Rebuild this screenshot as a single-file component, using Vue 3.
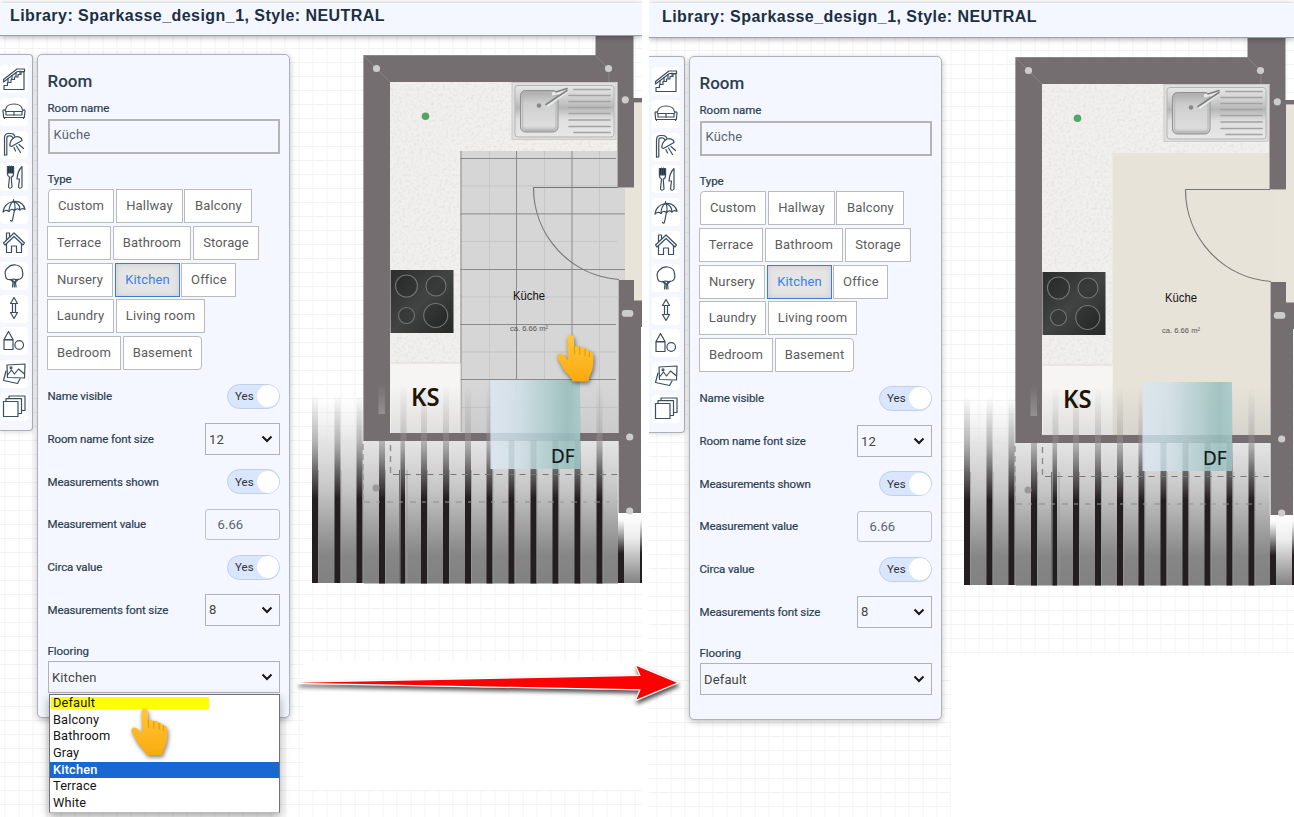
<script setup>
const screens = [
  { id: 'before', view: '0 0 642 817', flooring: 'Kitchen', open: true, tiled: true, floor: '#d6d6d6' },
  { id: 'after', view: '-3 -2 645 817', flooring: 'Default', open: false, tiled: false, floor: '#e7e3d8' },
]

const typeRows = [
  [['Custom', 66], ['Hallway', 67], ['Balcony', 68]],
  [['Terrace', 64], ['Bathroom', 78], ['Storage', 66]],
  [['Nursery', 66], ['Kitchen', 65], ['Office', 55]],
  [['Laundry', 67], ['Living room', 89]],
  [['Bedroom', 74], ['Basement', 79]],
]

const floorings = ['Default', 'Balcony', 'Bathroom', 'Gray', 'Kitchen', 'Terrace', 'White']

const rows = [
  { label: 'Name visible', kind: 'toggle' },
  { label: 'Room name font size', kind: 'select', value: '12' },
  { label: 'Measurements shown', kind: 'toggle' },
  { label: 'Measurement value', kind: 'input', value: '6.66' },
  { label: 'Circa value', kind: 'toggle' },
  { label: 'Measurements font size', kind: 'select', value: '8' },
]

const icons = [
  ['M2 22.500V18.500H5.500V15.500H9V12.500H12.500V10H16V7.500H19V5H22V22.500Z', 'M1.500 15L15.500 4.500H22.500V2H15L1.500 12.500Z', 'M6 11.500V15M10 8.500V12M14 5.500V9.500M18 4V7.500'],
  ['M3.500 11C4 6.500 8 5 12 5S20 6.500 20.500 11', 'M1 12Q1 10.500 2.800 11L4 13V16H20V13L21.200 11Q23 10.500 23 12L22.300 18.500H1.700Z', 'M4 12.500H20M12 12.500V16M2.500 18.500V19.500M21.500 18.500V19.500'],
  ['M2.500 23V6Q2.500 1.500 6.500 1.500H9Q12 1.500 13 4.500', 'M4.800 23V6.500Q4.800 3.800 7 3.800H8.500Q10 3.800 11 6M2.500 23H4.800', 'M8 14Q7.500 9 11.500 6Q15.500 3 19.500 6.500L20 8.500L9.500 14.500Z', 'M12 15.500L13.500 19M14.500 14L18.500 20.500M17 12.500L21.500 16.500'],
  ['M5.500 1.500V9Q5.500 11.500 7.500 12L6.500 22Q8 24.500 10 22L9.200 12Q11.500 11.500 11.500 9V1.500Z', 'M5.500 1.500H11.500V8H5.500ZM7.500 1V8M9.500 1V8', 'M20 1.500Q15.500 6 15 14H17.500L16.500 22Q18 24.500 20 22Z'],
  ['M1 14Q2 5.500 11 3.500Q21 2.500 23 11.500Q20 9.500 18 12Q15 9.500 12.500 12.500Q9 10 7 13.500Q4 11 1 14Z', 'M11 3.500Q7 7 7 13.500M11.500 3.500Q14 7 12.500 12.500M12 3.500Q18 6 18 12M11.500 1.500V3.500', 'M12.500 12L10.500 22Q10 24 8.500 22.500'],
  ['M1.500 13L12 3L22.500 13L21 15L12 6.500L3 15Z', 'M4.500 13.500V22.500H9.500V16H14.500V22.500H19.500V13.500', 'M4.500 9.500V3H7.500V7'],
  ['M9.500 16.500Q3.500 17.500 3.500 12.500Q2 8 5.500 5Q9 1 14 2Q20.500 3 20.500 9Q22 14 18 16Q14 17 11.500 16Z', 'M8.500 16.500L11 19L10.500 24M14 24L13.500 19L16 16.500M10.500 17L12.500 19.500L14 17M12.300 19.500V24'],
  ['M12 1.500L15.500 7.500H13.500V16.500H15.500L12 22.500L8.500 16.500H10.500V7.500H8.500Z', 'M8.500 7.500H15.500M8.500 16.500H15.500'],
  ['M6.500 2.500L11 10.500H2Z', 'M2 11H11V20.500H2Z', 'M21.500 16A4.300 4.300 0 1 1 12.900 16A4.300 4.300 0 1 1 21.500 16Z'],
  ['M5 3L23 2L22.500 16L5.500 15.500Z', 'M5.500 13L9.500 8L12.500 12L16.500 7L22.500 12', 'M8 5.800A1 1 0 1 1 10 5.800A1 1 0 1 1 8 5.800', 'M4 9L1.500 18.500L15.500 21.500L18 17'],
  ['M1.500 7.500H16V22.500H1.500Z', 'M4 7V4.700H19.500V19.500H16.500', 'M7 4.500V2H23V16.500H20'],
]

const bars = [312, 334.5, 356.5, 379, 400.5, 421, 443, 465, 486.5, 508.5, 530.5, 552.5, 574.5, 596.500]
const darkX = [461, 516.5, 572]
const lightX = [489.5, 544.5, 599.5]
const darkY = [158.5, 213.9, 269.5, 324.5, 379.5]
const lightY = [186, 241.5, 297, 352, 407.5]
const nodes = [[376.5, 68.5], [608.5, 68.5], [625.3, 99.8], [629.7, 437], [629.7, 511]]
const hobs = [[406.5, 286, 11], [436, 286, 10], [406.5, 315.5, 8], [435.7, 315.5, 12]]
</script>

<template>
  <main class="board">
    <section v-for="s in screens" :key="s.id" class="screen" :class="s.id">
      <svg class="plan" :viewBox="s.view">
        <defs>
          <pattern id="grid" x="312.5" y="48" width="14" height="14" patternUnits="userSpaceOnUse">
            <path d="M0 .5H14M.5 0V14" stroke="#f3f3f3" fill="none" />
          </pattern>
          <linearGradient id="deck" gradientUnits="userSpaceOnUse" x1="0" y1="395" x2="0" y2="583">
            <stop offset="0" stop-color="#eee" stop-opacity="0" />
            <stop offset=".25" stop-color="#dfdfdf" stop-opacity=".85" />
            <stop offset=".5" stop-color="#c6c6c6" />
            <stop offset=".85" stop-color="#868686" />
            <stop offset="1" stop-color="#818181" />
          </linearGradient>
          <linearGradient id="bar" gradientUnits="userSpaceOnUse" x1="0" y1="395" x2="0" y2="583">
            <stop offset="0" stop-color="#888" stop-opacity="0" />
            <stop offset=".24" stop-color="#888" stop-opacity=".5" />
            <stop offset=".4" stop-color="#555253" stop-opacity=".85" />
            <stop offset=".55" stop-color="#231e20" />
          </linearGradient>
          <linearGradient id="faint" gradientUnits="userSpaceOnUse" x1="0" y1="385" x2="0" y2="433">
            <stop offset="0" stop-color="#888" stop-opacity="0" />
            <stop offset="1" stop-color="#888" stop-opacity=".3" />
          </linearGradient>
          <linearGradient id="shade" x2="0" y2="1">
            <stop offset="0" stop-color="#bbb" stop-opacity="0" />
            <stop offset="1" stop-color="#bbb" stop-opacity=".38" />
          </linearGradient>
          <linearGradient id="glint" x2="0" y2="1">
            <stop offset="0" stop-color="#bbb" stop-opacity="0" />
            <stop offset="1" stop-color="#bbb" stop-opacity=".45" />
          </linearGradient>
          <linearGradient id="side" x2="0" y2="1">
            <stop offset="0" stop-color="#fff" /><stop offset=".35" stop-color="#eee" /><stop offset="1" stop-color="#828282" />
          </linearGradient>
          <linearGradient id="sidebar" x2="0" y2="1">
            <stop offset=".1" stop-color="#555" stop-opacity="0" /><stop offset=".58" stop-color="#231e20" />
          </linearGradient>
          <linearGradient id="glass">
            <stop offset="0" stop-color="#dce6f0" /><stop offset=".3" stop-color="#d3e0e8" />
            <stop offset=".7" stop-color="#accaca" /><stop offset=".86" stop-color="#9bbfbe" /><stop offset="1" stop-color="#a8caca" />
          </linearGradient>
          <linearGradient id="steel" x2="0" y2="1">
            <stop offset="0" stop-color="#e5e6e5" /><stop offset=".22" stop-color="#d2d3d2" /><stop offset=".43" stop-color="#b6b7b6" />
            <stop offset=".65" stop-color="#dedfde" /><stop offset="1" stop-color="#e7e8e7" />
          </linearGradient>
          <linearGradient id="basin" x2="0" y2="1">
            <stop offset="0" stop-color="#a9aaa9" /><stop offset=".3" stop-color="#cdcecd" /><stop offset=".85" stop-color="#dcdddc" /><stop offset="1" stop-color="#b5b5b5" />
          </linearGradient>
          <linearGradient id="hob" x2="1" y2="1">
            <stop offset="0" stop-color="#2c2d2d" /><stop offset=".5" stop-color="#414443" /><stop offset="1" stop-color="#262727" />
          </linearGradient>
          <filter id="grain" x="0" y="0" width="1" height="1">
            <feTurbulence type="fractalNoise" baseFrequency=".35" numOctaves="2" />
            <feColorMatrix values="0 0 0 0 .6  0 0 0 0 .58  0 0 0 0 .56  1.6 0 0 0 -.68" />
          </filter>
        </defs>
        <rect x="-3" y="-2" width="645" height="819" fill="#fff" />
        <rect x="-3" y="34" width="645" height="783" fill="url(#grid)" />
        <rect v-if="s.open" x="303" y="662" width="339" height="128" fill="#fff" />
        <rect v-else x="299" y="653" width="343" height="164" fill="#fff" />

        <g class="rooms">
          <path d="M625 187.500H634V103H642V301H625Z" fill="#e8e4d9" />
          <rect x="390" y="81" width="228" height="352" fill="#f1f0ef" />
          <rect x="390" y="81" width="228" height="282" filter="url(#grain)" opacity=".4" />
          <path d="M460.500 151H617V187.500H625V280H618V433H460.500Z" :fill="s.floor" />
          <g v-if="s.tiled">
            <path v-for="x in lightX" :key="x" :d="`M${x} 151V433`" stroke="#c7c7c7" />
            <path v-for="y in lightY" :key="y" :d="`M461 ${y}H617`" stroke="#c5c5c5" />
            <path v-for="x in darkX" :key="x" :d="`M${x} 151V432`" stroke="#8c8c8c" />
            <path v-for="y in darkY" :key="y" :d="`M460 ${y}H${y > 200 && y < 280 ? 625 : 616}`" stroke="#8a8a8a" />
          </g>
          <path d="M533.500 187.500H618M533.500 187.500A92 92 0 0 0 619 279.500" stroke="#777" stroke-width="1.200" fill="none" />
          <rect x="391" y="363" width="69.500" height="70" fill="#f6f5f4" />
          <path d="M391 363H460" stroke="#ddd9d2" />
        </g>

        <g class="deck">
          <rect x="312" y="395" width="52" height="188" fill="url(#deck)" />
          <rect x="391" y="385" width="227" height="48" fill="url(#shade)" />
          <rect x="364" y="441" width="254" height="142.500" fill="url(#deck)" />
          <g v-for="x in bars" :key="x">
            <rect v-if="x > 395" :x="x" y="385" width="6" height="48" fill="url(#faint)" />
            <rect :x="x" :y="x > 364 ? 441 : 395" :width="x === 400.5 ? 4.500 : 6" :height="x > 364 ? 142.500 : 188" fill="url(#bar)" />
            <path :d="`M${x + 6.500} 470V583`" stroke="#9a9a9a" stroke-width=".7" />
          </g>
          <path d="M399.500 470V583" stroke="#6f7373" />
          <rect x="618" y="513" width="24" height="70" fill="url(#side)" />
          <rect x="618" y="513" width="6" height="70" fill="url(#sidebar)" />
          <rect x="640" y="513" width="2" height="70" fill="url(#sidebar)" />
          <circle cx="376" cy="488" r="3.500" fill="#999" />
          <path d="M363 444V500" stroke="#8c8c8c" stroke-width="1.200" stroke-dasharray="6 4" />
          <path d="M364 502H618" stroke="#8c8c8c" stroke-width="1.200" stroke-dasharray="6 17" />
          <path d="M376 502H618" stroke="#999" stroke-dasharray="4 19" />
          <path d="M390.500 445V474" stroke="#8c8c8c" stroke-width="1.400" stroke-dasharray="6 5" />
          <path d="M393 474.500H618" stroke="#777" stroke-dasharray="6 5.500" />
        </g>

        <g class="walls" fill="#746e70">
          <path d="M363.500 55H595.500V34H633.500V98H642V102.500H634V187.500H617.500V82H390V433H618.500V280H634V300.500H642V327H641V513H618.500V441H363.500Z" />
          <path d="M618 441V513" stroke="#ddd" stroke-width=".8" />
          <path d="M364 56L390 82M596 56L609 69V82" stroke="#918c8e" stroke-width=".7" fill="none" />
          <path d="M363.500 55.500V441M364 55.500H595.500" stroke="#999" stroke-width=".6" fill="none" />
          <rect x="378.500" y="384" width="6.500" height="30" fill="url(#glint)" />
          <rect v-for="x in bars.slice(4)" :key="x" :x="x" y="433" width="6" height="8" fill="#a29ea0" opacity=".35" />
          <circle v-for="(n, i) in nodes" :key="i" :cx="n[0]" :cy="n[1]" r="3.600" fill="#ccc" />
          <rect x="621.800" y="310" width="11.600" height="6.800" rx="3.400" fill="#ccc" />
          <circle cx="425.500" cy="116.200" r="3.800" fill="#50a664" />
        </g>

        <g class="sink">
          <rect x="512" y="82.500" width="104" height="57" fill="#dedfde" stroke="#c9cac9" />
          <rect x="515" y="85.500" width="99" height="51.500" rx="3" fill="url(#steel)" stroke="#b3b4b3" />
          <rect x="520.500" y="90.500" width="37.500" height="41.500" rx="5" fill="url(#basin)" stroke="#919191" />
          <rect x="522.500" y="92.500" width="33.500" height="37.500" rx="4" fill="none" stroke="#b4b5b4" stroke-width="1.500" opacity=".7" />
          <circle cx="539" cy="105.500" r="2.300" fill="#888" />
          <path v-for="y in [89.500, 95.500, 101.500, 107.500, 113.500, 120, 126.500, 132.500]" :key="y"
            :d="y < 90 || y > 132 ? `M574 ${y}H610` : `M569 ${y}H610`" stroke="#a2a3a2" stroke-width="1.700" stroke-linecap="round" />
          <path d="M547 106L567 91L552 94" stroke="#e9eaea" stroke-width="3" fill="none" />
          <path d="M546 104.500L567 90.500M556 92L567 88.500" stroke="#7f8181" stroke-width="1.600" fill="none" stroke-linecap="round" />
        </g>

        <g class="stove">
          <rect x="390.500" y="270" width="63" height="63" fill="url(#hob)" />
          <circle v-for="h in hobs" :key="h[2]" :cx="h[0]" :cy="h[1]" :r="h[2]" stroke="#737574" stroke-width="1.100" fill="#000" fill-opacity=".12" />
        </g>

        <text x="411" y="406" class="ks" textLength="28.500" lengthAdjust="spacingAndGlyphs">KS</text>
        <rect x="490.500" y="380" width="89.500" height="89" fill="url(#glass)" :opacity="s.open ? .94 : .9" />
        <path v-for="x in bars.slice(9, 13)" :key="x" :d="`M${x + 3} 440V469`" stroke="#5f858b" stroke-width="6" opacity=".12" />
        <path d="M490.500 437H580" stroke="#8ba9b2" stroke-width="8" opacity=".22" />
        <text x="551" y="462.700" class="df" textLength="23.500" lengthAdjust="spacingAndGlyphs">DF</text>
        <text x="513" y="299.800" class="name" textLength="32" lengthAdjust="spacingAndGlyphs">Küche</text>
        <text x="510" y="330.800" class="area" textLength="38" lengthAdjust="spacingAndGlyphs">ca. 6.66 m²</text>
      </svg>

      <header class="topbar">Library: Sparkasse_design_1, Style: NEUTRAL</header>
      <div class="body">
        <nav class="tools">
          <span v-for="(paths, i) in icons" :key="i" class="tool">
            <svg viewBox="0 0 24 25"><path v-for="(d, k) in paths" :key="k" :d="d" :class="{ solid: i === 3 && k === 1 }" /></svg>
          </span>
        </nav>
        <form class="panel">
          <h2>Room</h2>
          <label class="lbl">Room name</label>
          <div class="field">Küche</div>
          <label class="lbl type">Type</label>
          <div class="types">
            <div v-for="(row, i) in typeRows" :key="i" class="typerow">
              <span v-for="t in row" :key="t[0]" class="btn" :class="{ on: t[0] === 'Kitchen' }" :style="{ width: t[1] + 'px' }">{{ t[0] }}</span>
            </div>
          </div>
          <div class="rows">
            <div v-for="r in rows" :key="r.label" class="row">
              <span class="lbl">{{ r.label }}</span>
              <span v-if="r.kind === 'toggle'" class="toggle">Yes<i></i></span>
              <span v-else-if="r.kind === 'select'" class="select small">{{ r.value }}<svg viewBox="0 0 12 8"><path d="M1.500 1.500L6 6L10.500 1.500" /></svg></span>
              <span v-else class="value">{{ r.value }}</span>
            </div>
          </div>
          <label class="lbl">Flooring</label>
          <div class="select wide">{{ s.flooring }}<svg viewBox="0 0 12 8"><path d="M1.500 1.500L6 6L10.500 1.500" /></svg></div>
          <ul v-if="s.open" class="menu">
            <li v-for="f in floorings" :key="f" :class="{ picked: f === 'Kitchen', marked: f === 'Default' }">{{ f }}</li>
          </ul>
        </form>
      </div>
    </section>

    <svg class="notes" viewBox="0 0 1294 817">
      <defs>
        <linearGradient id="skin" x2="0" y2="1"><stop offset="0" stop-color="#ffc83a" /><stop offset="1" stop-color="#fba90e" /></linearGradient>
      </defs>
      <path class="arrow" d="M299 682.700L640.700 676L636.500 666L677 682.700L636.500 699.500L640.700 689.300Z" />
      <g v-for="p in [[557.300, 335], [131.300, 708.800]]" :key="p[0]" class="hand" :transform="`translate(${p[0]} ${p[1]})`">
        <path fill="url(#skin)" d="M10 4Q10 0 13.200 0Q16.300 0 16.500 3.500L17 11.500Q19.500 10 22 12.500Q25.500 11 27.500 14Q30.500 13.500 31.500 16.500Q35.500 16 36 21Q36.500 29 35 35L32 42L31.500 45Q31 46.500 29 46.500H17Q15 46.500 14.500 44.500L12 41Q6 35 4 30L.3 23Q-.5 19.500 2 18.800Q5 18.300 7 21L10.500 25Z" />
        <path d="M17 11.500L17.500 19M22.500 12.500V19.500M27.800 14.500V20.500M32 17V21.500" stroke="#e59600" stroke-width="1" fill="none" stroke-linecap="round" />
      </g>
    </svg>
  </main>
</template>

<style>
body { margin: 0; background: #fff; overflow: hidden; }
</style>

<style scoped>
.board { position: relative; display: grid; grid-template-columns: 642px 645px; column-gap: 7px; width: 1294px; height: 817px; overflow: hidden; font-family: Roboto, "Liberation Sans", sans-serif; }
.screen { position: relative; height: 817px; overflow: hidden; }
.after .topbar { height: 33px; padding-left: 13px; padding-top: 1px; }
.after .body { padding-left: 3px; }
.plan, .notes { position: absolute; inset: 0; width: 100%; height: 100%; }
.notes { pointer-events: none; }
.topbar { position: relative; box-sizing: content-box; height: 32px; margin-top: 3px; padding-left: 10px; background: #f4f7ff; border-bottom: 1px solid #9ca0a8; box-shadow: 0 1px 6px rgba(0, 0, 0, .35); font: bold 16px/25px "Liberation Sans", sans-serif; letter-spacing: .45px; color: #1c2f42; white-space: nowrap; }
.body { position: relative; display: flex; align-items: flex-start; padding-top: 18px; }
.tools { box-sizing: border-box; width: 33px; height: 377px; border: 1px solid #abafb6; border-left: 0; border-radius: 0 4px 4px 0; background: #f4f7ff; padding-top: 10px; display: flex; flex-direction: column; gap: 4.800px; box-shadow: 0 1px 5px rgba(0, 0, 0, .15); }
.after .tools { width: 36px; margin-left: -3px; padding-left: 3px; }
.tool { width: 28px; height: 28px; flex: none; background: #fff; border-radius: 4px; display: flex; align-items: center; justify-content: center; }
.tool svg { width: 24px; height: 25px; }
.tool path { fill: none; stroke: #3b4f61; stroke-width: 1.200; stroke-linejoin: round; stroke-linecap: round; }
.tool path.solid { fill: #1c2f42; }
.panel { position: relative; box-sizing: border-box; width: 253px; height: 664px; margin-left: 4px; padding: 16px 9px 0 10px; border: 1px solid #adb1b8; border-radius: 5px; background: #f4f7ff; box-shadow: 0 2px 6px rgba(0, 0, 0, .25); color: #2c3e50; display: flex; flex-direction: column; }
h2 { margin: 0 0 0 -.5px; font-size: 17px; line-height: 20px; font-weight: 500; letter-spacing: 0; }
.lbl { margin-left: -.5px; font-size: 11.500px; line-height: 14px; letter-spacing: -.13px; -webkit-text-stroke: .2px #2c3e50; }
h2 + .lbl { margin-top: 10px; letter-spacing: 0; }
.field { box-sizing: border-box; height: 35px; margin-top: 4px; border: 2px solid #b3b4b6; padding-left: 3.500px; font-size: 13px; line-height: 28px; letter-spacing: .15px; color: #5a6470; }
.type { margin-top: 18px; }
.types { display: flex; flex-direction: column; gap: 2.750px; margin: 3px 0 0 -1px; }
.typerow { display: flex; gap: 2px; }
.typerow:first-child { margin-left: 1px; }
.typerow:first-child .btn:last-child, .typerow:nth-child(3) .btn:last-child { margin-left: -.6px; }
.btn { box-sizing: border-box; height: 34px; flex: none; border: 1px solid #b9bbbf; background: #fff; color: #5c5c5c; font-size: 13px; line-height: 32px; letter-spacing: .15px; text-align: center; }
.btn.on { border-color: #3b7be0; background: #e5e5e6; color: #3f7bf2; box-shadow: inset 0 0 6px #c9cacc; outline: 0; }
.typerow:first-child .btn:first-child { border-top-left-radius: 4px; }
.typerow:last-child .btn:last-child { border-radius: 0 4px 4px 0; }
.rows { margin-top: 5px; display: flex; flex-direction: column; }
.row { display: flex; height: 42.700px; align-items: center; justify-content: space-between; }
.toggle { box-sizing: border-box; width: 53px; height: 25px; padding-left: 7px; border: 1px solid #bfd0ea; border-radius: 13px; background: #d9e6fd; display: flex; align-items: center; justify-content: space-between; font-size: 11.500px; letter-spacing: 0; color: #333; }
.toggle i { width: 22px; height: 22px; border-radius: 50%; background: #fff; }
.select { box-sizing: border-box; border: 1px solid #b0b2b6; height: 32px; padding: 0 6px 0 3px; display: flex; align-items: center; justify-content: space-between; font-size: 13px; letter-spacing: .15px; color: #444; }
.small { width: 75px; }
.select svg { width: 12px; height: 8px; }
.select path { fill: none; stroke: #161616; stroke-width: 2; }
.value { box-sizing: border-box; width: 75px; height: 31px; border: 1px solid #c0c2c6; border-radius: 3px; padding-left: 11.500px; font-size: 13px; line-height: 29px; letter-spacing: .1px; color: #5a6470; }
.rows + .lbl { margin-top: 13px; letter-spacing: -.05px; }
.wide { margin-top: 3px; flex: none; }
.menu { position: absolute; left: 11px; top: 639px; box-sizing: border-box; width: 231px; height: 119px; margin: 0; padding: 0; list-style: none; background: #fff; border: 1px solid #6e7176; border-bottom-color: #bbb; box-shadow: 0 4px 9px rgba(0, 0, 0, .35); color: #151515; font-size: 12.800px; letter-spacing: .15px; }
.menu li { height: 16.650px; line-height: 15px; padding-left: 3px; }
.menu .picked { background: #1967d2; color: #fff; font-weight: 500; }
.menu .marked { background: linear-gradient(#ff0, #ff0) 1px 2px / 158px 12.500px no-repeat; }
.ks { font: 600 24.500px "Noto Sans", sans-serif; fill: #1f1405; }
.df { font: 400 19.500px "Noto Sans", sans-serif; fill: #111a1c; stroke: #111a1c; stroke-width: .2; }
.name { font: 12px "Liberation Sans", sans-serif; fill: #111; }
.area { font: 7.500px "Liberation Sans", sans-serif; fill: #555; }
.arrow { fill: #f00; stroke: #fff; stroke-width: 2.500; paint-order: stroke; stroke-linejoin: round; filter: drop-shadow(1px 3px 2px rgba(0, 0, 0, .7)); }
.hand { filter: drop-shadow(1px 2px 2px rgba(0, 0, 0, .5)); }
</style>
